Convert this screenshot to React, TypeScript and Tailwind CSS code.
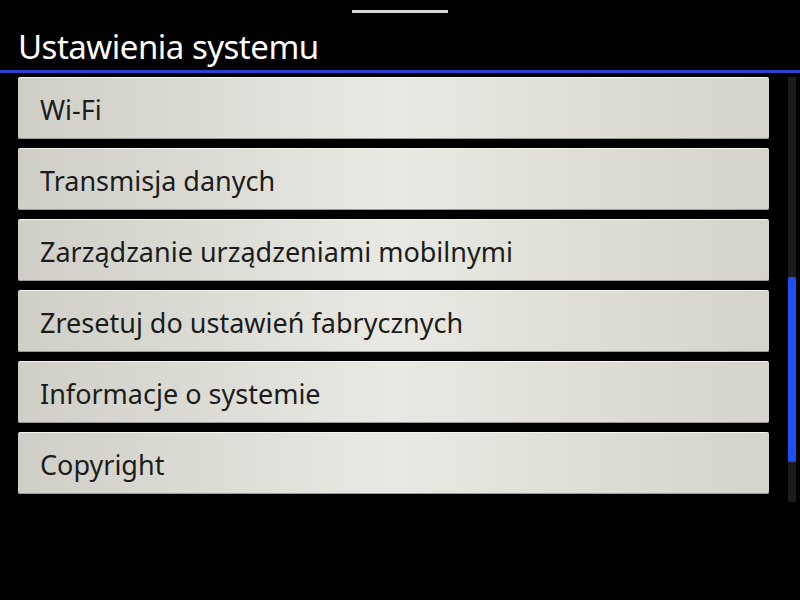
import React from 'react';

const items = [
  'Wi-Fi',
  'Transmisja danych',
  'Zarządzanie urządzeniami mobilnymi',
  'Zresetuj do ustawień fabrycznych',
  'Informacje o systemie',
  'Copyright',
];

const MenuRow: React.FC<{ label: string }> = ({ label }) => (
  <button className="flex h-[62px] w-full items-center rounded-[2px] border-t border-[#f4f4ee] bg-gradient-to-r from-[#cfcfc8] via-[#e9e9e3] to-[#d4d4cc] px-[22px] pt-[4px] text-left text-[27px] text-[#1c1c1c] shadow-[inset_0_-1px_0_#9a9a92]">
    {label}
  </button>
);

export default function App() {
  return (
    <div
      className="flex h-[600px] w-[800px] flex-col bg-black"
      style={{ fontFamily: '"Noto Sans", "Open Sans", sans-serif' }}
    >
      <div className="flex h-[24px] justify-center pt-[10px]">
        <div className="h-[3px] w-[96px] bg-[#d8d8d8]" />
      </div>
      <h1 className="h-[46px] pl-[18px] text-[33px] leading-[46px] tracking-[-0.5px] text-white">
        Ustawienia systemu
      </h1>
      <div className="h-[3px] bg-[#2b3fd0]" />
      <div className="flex flex-1 gap-[19px] pl-[18px] pr-[4px] pt-[4px]">
        <div className="flex flex-1 flex-col gap-[9px]">
          {items.map((label) => (
            <MenuRow key={label} label={label} />
          ))}
        </div>
        <div className="flex h-[425px] w-[8px] flex-col bg-[#1c1c1c] pt-[200px]">
          <div className="h-[185px] w-full rounded-[2px] bg-[#1f4ff0]" />
        </div>
      </div>
    </div>
  );
}
